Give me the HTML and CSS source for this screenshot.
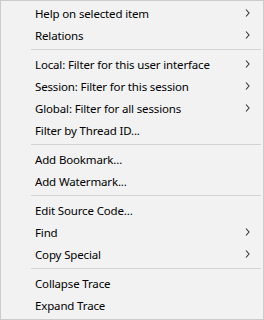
FILE: index.html
```html
<!DOCTYPE html>
<html lang="en">
<head>
    <meta charset="UTF-8">
    <title>Context menu</title>
    <link rel="stylesheet" href="styles.css">
</head>
<body>
    <div class="menu">
        <div class="item">Help on selected item<svg class="arrow" viewBox="0 0 5 8"><polyline points="1,0.5 4,4 1,7.5"/></svg></div>
        <div class="item">Relations<svg class="arrow" viewBox="0 0 5 8"><polyline points="1,0.5 4,4 1,7.5"/></svg></div>
        <div class="sep"></div>
        <div class="item">Local: Filter for this user interface<svg class="arrow" viewBox="0 0 5 8"><polyline points="1,0.5 4,4 1,7.5"/></svg></div>
        <div class="item">Session: Filter for this session<svg class="arrow" viewBox="0 0 5 8"><polyline points="1,0.5 4,4 1,7.5"/></svg></div>
        <div class="item">Global: Filter for all sessions<svg class="arrow" viewBox="0 0 5 8"><polyline points="1,0.5 4,4 1,7.5"/></svg></div>
        <div class="item">Filter by Thread ID...</div>
        <div class="sep"></div>
        <div class="item">Add Bookmark...</div>
        <div class="item">Add Watermark...</div>
        <div class="sep"></div>
        <div class="item">Edit Source Code...</div>
        <div class="item">Find<svg class="arrow" viewBox="0 0 5 8"><polyline points="1,0.5 4,4 1,7.5"/></svg></div>
        <div class="item">Copy Special<svg class="arrow" viewBox="0 0 5 8"><polyline points="1,0.5 4,4 1,7.5"/></svg></div>
        <div class="sep"></div>
        <div class="item">Collapse Trace</div>
        <div class="item">Expand Trace</div>
    </div>
</body>
</html>
```

FILE: styles.css
```css
body {
    margin: 0;
    padding: 0;
    background-color: #f2f2f2;
}

.menu {
    box-sizing: border-box;
    width: 264px;
    height: 320px;
    padding: 1px 2px 0 2px;
    border: 1px solid #cccccc;
    background-color: #f2f2f2;
    font-family: "Segoe UI", "Noto Sans", sans-serif;
    font-size: 11.5px;
    letter-spacing: -0.15px;
    color: #000;
}

.item {
    display: flex;
    align-items: center;
    justify-content: space-between;
    height: 22px;
    padding: 0 11px 0 32px;
    white-space: nowrap;
}

.arrow {
    width: 5px;
    height: 8px;
    fill: none;
    stroke: #333;
    stroke-width: 1.1;
}

.sep {
    height: 1px;
    margin: 3px 0 3px 28px;
    background-color: #d3d3d3;
}
```
